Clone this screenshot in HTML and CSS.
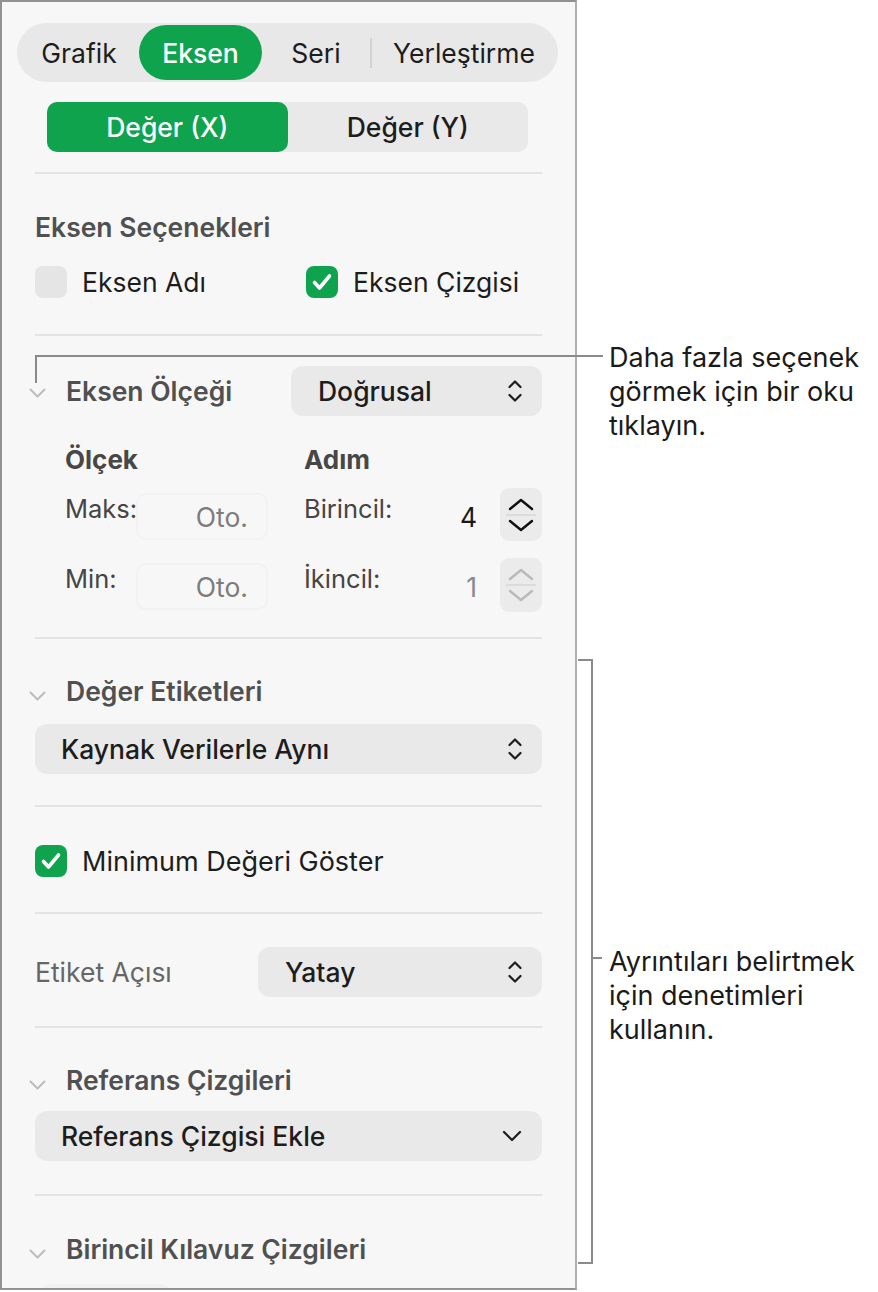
FILE: index.html
```html
<!DOCTYPE html>
<html lang="tr">
  <head>
    <meta charset="UTF-8" />
    <meta name="viewport" content="width=device-width, initial-scale=1.0" />
    <title>Eksen</title>
    <link rel="stylesheet" href="styles.css">
  </head>

  <body>
    <div class="page">
      <div class="panel">
        <div class="tabs">
          <span class="tab tab-grafik">Grafik</span>
          <span class="tab tab-eksen active">Eksen</span>
          <span class="tab tab-seri">Seri</span>
          <span class="tab-sep"></span>
          <span class="tab tab-yer">Yerleştirme</span>
        </div>

        <div class="segment">
          <span class="seg active">Değer (X)</span>
          <span class="seg">Değer (Y)</span>
        </div>

        <div class="divider d1"></div>

        <h3 class="heading options-title">Eksen Seçenekleri</h3>
        <div class="check-row">
          <label class="check-item">
            <span class="check"></span>
            <span>Eksen Adı</span>
          </label>
          <label class="check-item">
            <span class="check on">
              <svg width="32" height="32" viewBox="0 0 32 32"><path d="M8.5 16.5 L13.5 22 L23.5 10" /></svg>
            </span>
            <span>Eksen Çizgisi</span>
          </label>
        </div>

        <div class="divider d2"></div>

        <div class="scale-row">
          <svg class="disc" width="17" height="10" viewBox="0 0 17 10"><path d="M1.5 1.5 L8.5 8.5 L15.5 1.5" /></svg>
          <span class="heading inline">Eksen Ölçeği</span>
          <div class="popup popup-scale">
            <span>Doğrusal</span>
            <svg class="updown" width="14" height="24" viewBox="0 0 14 24"><path d="M1.5 8 L7 2.5 L12.5 8 M1.5 16 L7 21.5 L12.5 16" /></svg>
          </div>
        </div>

        <div class="scale-grid">
          <span class="sub-head">Ölçek</span>
          <span class="sub-head col-step">Adım</span>

          <span class="field-label">Maks:</span>
          <span class="field auto">Oto.</span>
          <span class="field-label col-step">Birincil:</span>
          <span class="field num">4</span>
          <div class="stepper">
            <svg width="26" height="13" viewBox="0 0 26 13"><path d="M2 11 L13 2 L24 11" /></svg>
            <span class="stepper-line"></span>
            <svg width="26" height="13" viewBox="0 0 26 13"><path d="M2 2 L13 11 L24 2" /></svg>
          </div>

          <span class="field-label row-min">Min:</span>
          <span class="field auto row-min">Oto.</span>
          <span class="field-label col-step row-min">İkincil:</span>
          <span class="field num dim row-min">1</span>
          <div class="stepper off row-min">
            <svg width="26" height="13" viewBox="0 0 26 13"><path d="M2 11 L13 2 L24 11" /></svg>
            <span class="stepper-line"></span>
            <svg width="26" height="13" viewBox="0 0 26 13"><path d="M2 2 L13 11 L24 2" /></svg>
          </div>
        </div>

        <div class="divider d3"></div>

        <div class="section-head sh-labels">
          <svg class="disc" width="17" height="10" viewBox="0 0 17 10"><path d="M1.5 1.5 L8.5 8.5 L15.5 1.5" /></svg>
          <span class="heading inline">Değer Etiketleri</span>
        </div>
        <div class="popup popup-wide popup-labels">
          <span>Kaynak Verilerle Aynı</span>
          <svg class="updown" width="14" height="24" viewBox="0 0 14 24"><path d="M1.5 8 L7 2.5 L12.5 8 M1.5 16 L7 21.5 L12.5 16" /></svg>
        </div>

        <div class="divider d4"></div>

        <label class="check-item min-row">
          <span class="check on">
            <svg width="32" height="32" viewBox="0 0 32 32"><path d="M8.5 16.5 L13.5 22 L23.5 10" /></svg>
          </span>
          <span>Minimum Değeri Göster</span>
        </label>

        <div class="divider d5"></div>

        <div class="angle-row">
          <span class="angle-label">Etiket Açısı</span>
          <div class="popup popup-angle">
            <span>Yatay</span>
            <svg class="updown" width="14" height="24" viewBox="0 0 14 24"><path d="M1.5 8 L7 2.5 L12.5 8 M1.5 16 L7 21.5 L12.5 16" /></svg>
          </div>
        </div>

        <div class="divider d6"></div>

        <div class="section-head sh-ref">
          <svg class="disc" width="17" height="10" viewBox="0 0 17 10"><path d="M1.5 1.5 L8.5 8.5 L15.5 1.5" /></svg>
          <span class="heading inline">Referans Çizgileri</span>
        </div>
        <div class="popup popup-wide popup-ref">
          <span>Referans Çizgisi Ekle</span>
          <svg class="down" width="20" height="12" viewBox="0 0 20 12"><path d="M2 2 L10 10 L18 2" /></svg>
        </div>

        <div class="divider d7"></div>

        <div class="section-head sh-grid">
          <svg class="disc" width="17" height="10" viewBox="0 0 17 10"><path d="M1.5 1.5 L8.5 8.5 L15.5 1.5" /></svg>
          <span class="heading inline">Birincil Kılavuz Çizgileri</span>
        </div>
        <div class="peek"></div>
      </div>

      <div class="notes">
        <p class="note note-more">Daha fazla seçenek<br>görmek için bir oku<br>tıklayın.</p>
        <p class="note note-detail">Ayrıntıları belirtmek<br>için denetimleri<br>kullanın.</p>
      </div>

      <!-- callout lines -->
      <div class="leader-h"></div>
      <div class="leader-v"></div>
      <div class="bracket"></div>
      <div class="bracket-tick"></div>
    </div>
  </body>
</html>
```

FILE: styles.css
```css
body {
  margin: 0;
  padding: 0;
  background-color: #fff;
  color: #1d1d1d;
  font-family: Inter, "Liberation Sans", sans-serif;
}

.page {
  position: relative;
  display: flex;
  width: 878px;
  height: 1292px;
}

.panel {
  box-sizing: border-box;
  width: 577px;
  height: 1290px;
  padding: 0 33px;
  border: 2px solid #929292;
  border-right-color: #b0b0b0;
  background: #f7f7f7;
  overflow: hidden;
  white-space: nowrap;
}

/* top tabs */
.tabs {
  display: flex;
  align-items: center;
  box-sizing: border-box;
  height: 59px;
  margin: 21px -16px 0 -18px;
  padding: 0 2px;
  background: #e8e8e8;
  border-radius: 30px;
}

.tab {
  display: flex;
  align-items: center;
  justify-content: center;
  height: 55px;
  font-size: 26.5px;
}

.tab-grafik { width: 120px; }
.tab-eksen { width: 123px; }
.tab-seri { width: 108px; }
.tab-yer { flex: 1; }

.tab.active {
  background: #0fa34e;
  color: #fff;
  border-radius: 28px;
  font-weight: 500;
}

.tab-sep {
  width: 2px;
  height: 30px;
  background: #d3d3d3;
}

/* segmented control */
.segment {
  display: flex;
  height: 50px;
  margin: 20px 14px 0 12px;
  background: #e9e9e9;
  border-radius: 10px;
}

.seg {
  flex: 1;
  display: flex;
  align-items: center;
  justify-content: center;
  font-size: 26.5px;
  font-weight: 500;
}

.seg.active {
  background: #0fa34e;
  color: #fff;
  border-radius: 10px;
}

.divider {
  height: 2px;
  background: #e3e3e3;
}

.d1 { margin-top: 20px; }
.d2 { margin-top: 36px; }
.d3 { margin-top: 25px; }
.d4 { margin-top: 31px; }
.d5 { margin-top: 35px; }
.d6 { margin-top: 29px; }
.d7 { margin-top: 33px; }

.heading {
  margin: 0;
  font-size: 26.5px;
  font-weight: 600;
  color: #505050;
  line-height: 30px;
}

.options-title {
  margin-top: 38px;
}

/* checkboxes */
.check-row {
  display: grid;
  grid-template-columns: 271px auto;
  margin-top: 24px;
}

.check-item {
  display: flex;
  align-items: center;
  gap: 15px;
  height: 32px;
  font-size: 26.5px;
}

.check {
  flex: none;
  width: 32px;
  height: 32px;
  border-radius: 8px;
  background: #e5e5e5;
}

.check.on {
  background: #0fa34e;
}

.check svg path {
  fill: none;
  stroke: #fff;
  stroke-width: 3.6;
  stroke-linecap: round;
  stroke-linejoin: round;
}

.min-row {
  margin-top: 38px;
  font-size: 27px;
}

/* disclosure rows */
.disc {
  flex: none;
  margin: 0 20px 0 -6px;
}

.disc path {
  fill: none;
  stroke: #bcbcbc;
  stroke-width: 2;
  stroke-linecap: round;
  stroke-linejoin: round;
}

.scale-row {
  display: flex;
  align-items: center;
  height: 50px;
  margin-top: 30px;
}

.scale-row .disc {
  margin-top: 4px;
}

.section-head {
  display: flex;
  align-items: center;
  height: 30px;
}

.section-head .disc {
  margin-top: 10px;
}

.sh-labels { margin-top: 37px; }
.sh-ref { margin-top: 37px; }
.sh-grid { margin-top: 38px; }

/* popups */
.popup {
  display: flex;
  align-items: center;
  justify-content: space-between;
  box-sizing: border-box;
  height: 50px;
  padding: 0 20px 0 27px;
  background: #e9e9e9;
  border-radius: 12px;
  font-size: 26.5px;
  font-weight: 500;
}

.popup svg path {
  fill: none;
  stroke: #1d1d1d;
  stroke-width: 2.2;
  stroke-linecap: round;
  stroke-linejoin: round;
}

.popup-scale {
  width: 251px;
  margin-left: auto;
}

.popup-wide {
  padding-left: 26px;
}

.popup-labels { margin-top: 18px; }
.popup-ref { margin-top: 16px; }

.angle-row {
  display: flex;
  align-items: center;
  margin-top: 33px;
}

.angle-label {
  font-size: 26.5px;
  color: #666;
}

.popup-angle {
  width: 284px;
  margin-left: auto;
}

/* scale grid */
.scale-grid {
  display: grid;
  grid-template-columns: 71px 132px 36px 126px 58px 12px 42px;
  grid-template-rows: 30px 13px 53px 17px 54px;
  margin: 29px 0 0 30px;
}

.sub-head {
  grid-row: 1;
  grid-column: 1 / 4;
  font-size: 26px;
  font-weight: 700;
  color: #474747;
  line-height: 30px;
}

.sub-head.col-step {
  grid-column: 4 / 8;
}

.field-label,
.field,
.stepper {
  grid-row: 3;
}

.scale-grid .row-min {
  grid-row: 5;
}

.field-label {
  grid-column: 1;
  font-size: 25.5px;
  color: #454545;
  line-height: 42px;
}

.field-label.col-step {
  grid-column: 4;
}

.field {
  display: flex;
  align-items: center;
  box-sizing: border-box;
  height: 47px;
  margin-top: 5px;
  border: 2px solid #f2f2f2;
  border-radius: 10px;
  font-size: 26.5px;
}

.field.auto {
  grid-column: 2;
  justify-content: flex-end;
  padding-right: 18px;
  color: #7c7c7c;
}

.field.num {
  grid-column: 5;
  justify-content: flex-end;
  padding-right: 9px;
  border-color: transparent;
  color: #1a1a1a;
}

.field.dim {
  color: #8a8a8a;
}

.stepper {
  grid-column: 7;
  display: flex;
  flex-direction: column;
  align-items: center;
  justify-content: center;
  gap: 3px;
  height: 53px;
  background: #ebebeb;
  border-radius: 9px;
}

.stepper path {
  fill: none;
  stroke: #111;
  stroke-width: 2.4;
  stroke-linecap: round;
  stroke-linejoin: round;
}

.stepper.off {
  height: 54px;
}

.stepper.off path {
  stroke: #b9b9b9;
}

.stepper-line {
  width: 30px;
  height: 2px;
  background: #dcdcdc;
}

.peek {
  width: 130px;
  height: 20px;
  margin: 20px 0 0 6px;
  border-radius: 10px;
  background: #f1f1f1;
}

/* callouts */
.notes {
  flex: 1;
  padding-left: 32px;
  white-space: nowrap;
}

.note {
  margin: 0;
  font-size: 27px;
  line-height: 34px;
  color: #1a1a1a;
}

.note-more {
  margin-top: 341px;
}

.note-detail {
  margin-top: 502px;
}

.leader-h {
  position: absolute;
  left: 35px;
  top: 355px;
  width: 568px;
  height: 2px;
  background: #8a8a8a;
}

.leader-v {
  position: absolute;
  left: 35px;
  top: 355px;
  width: 2px;
  height: 28px;
  background: #8a8a8a;
}

.bracket {
  position: absolute;
  left: 578px;
  top: 659px;
  width: 13px;
  height: 601px;
  border: 2px solid #8a8a8a;
  border-left: 0;
}

.bracket-tick {
  position: absolute;
  left: 593px;
  top: 957px;
  width: 9px;
  height: 2px;
  background: #8a8a8a;
}
```
